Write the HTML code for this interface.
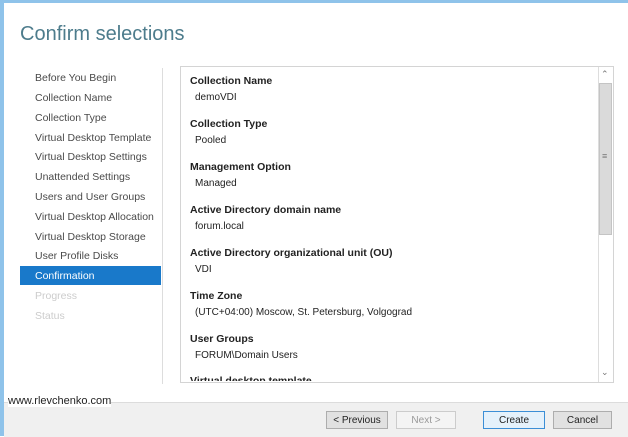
<!DOCTYPE html><html><head><style>
body{margin:0;width:628px;height:436px;overflow:hidden;background:#fff;font-family:"Liberation Sans",sans-serif;position:relative}
.a{position:absolute}
.nav{left:35px;font-size:10.5px;color:#4a4a4a;white-space:nowrap}
.h{left:190px;font-size:10.5px;font-weight:bold;color:#222}
.v{left:195px;font-size:10px;color:#222}
.btn{top:411px;height:18px;border:1px solid #adadad;background:#e1e1e1;font-size:10px;text-align:center;line-height:17px;color:#222;box-sizing:border-box}
</style></head><body>
<div class="a" style="left:0;top:0;width:628px;height:3px;background:#8fc3ea"></div>
<div class="a" style="left:0;top:0;width:4px;height:436px;background:#8fc3ea"></div>
<div class="a" style="left:20px;top:23px;font-size:20px;color:#4d7c8c">Confirm selections</div>
<div class="a" style="left:162px;top:68px;width:1px;height:316px;background:#ddd"></div>
<div class="a" style="left:20px;top:266px;width:141px;height:19px;background:#1979ca"></div>
<div class="a nav" style="top:72px">Before You Begin</div>
<div class="a nav" style="top:92px">Collection Name</div>
<div class="a nav" style="top:112px">Collection Type</div>
<div class="a nav" style="top:132px">Virtual Desktop Template</div>
<div class="a nav" style="top:151px">Virtual Desktop Settings</div>
<div class="a nav" style="top:171px">Unattended Settings</div>
<div class="a nav" style="top:191px">Users and User Groups</div>
<div class="a nav" style="top:211px">Virtual Desktop Allocation</div>
<div class="a nav" style="top:231px">Virtual Desktop Storage</div>
<div class="a nav" style="top:250px">User Profile Disks</div>
<div class="a nav" style="top:270px;color:#fff">Confirmation</div>
<div class="a nav" style="top:290px;color:#ccc">Progress</div>
<div class="a nav" style="top:310px;color:#ccc">Status</div>
<div class="a" style="left:180px;top:66px;width:432px;height:315px;border:1px solid #d4d4d4;overflow:hidden">
<div class="a" style="left:417px;top:0;width:15px;height:315px;border-left:1px solid #ddd;background:#fff"></div>
<div class="a" style="left:418px;top:16px;width:13px;height:152px;background:#dadada;border:1px solid #c4c4c4;box-sizing:border-box"></div>
<div class="a" style="left:420px;top:2px;font-size:9px;color:#777">&#8963;</div>
<div class="a" style="left:420px;top:300px;font-size:9px;color:#777">&#8964;</div>
<div class="a" style="left:421px;top:84px;font-size:9px;color:#777">&#8801;</div>
</div>
<div class="a h" style="top:75px">Collection Name</div><div class="a v" style="top:92px">demoVDI</div>
<div class="a h" style="top:118px">Collection Type</div><div class="a v" style="top:135px">Pooled</div>
<div class="a h" style="top:161px">Management Option</div><div class="a v" style="top:178px">Managed</div>
<div class="a h" style="top:204px">Active Directory domain name</div><div class="a v" style="top:221px">forum.local</div>
<div class="a h" style="top:247px">Active Directory organizational unit (OU)</div><div class="a v" style="top:264px">VDI</div>
<div class="a h" style="top:290px">Time Zone</div><div class="a v" style="top:307px">(UTC+04:00) Moscow, St. Petersburg, Volgograd</div>
<div class="a h" style="top:333px">User Groups</div><div class="a v" style="top:350px">FORUM\Domain Users</div>
<div class="a" style="left:190px;top:375px;height:6px;overflow:hidden;font-size:10.5px;font-weight:bold;color:#222">Virtual desktop template</div>
<div class="a" style="left:4px;top:402px;width:624px;height:34px;background:#f0f0f0;border-top:1px solid #dcdcdc"></div>
<div class="a" style="left:8px;top:395px;font-size:11px;color:#222;background:#fff">www.rlevchenko.com</div>
<div class="a btn" style="left:326px;width:62px">&lt; Previous</div>
<div class="a btn" style="left:396px;width:60px;color:#999;background:#f4f4f4;border-color:#ccc">Next &gt;</div>
<div class="a btn" style="left:483px;width:62px;background:#e5f1fb;border-color:#3c8ed6">Create</div>
<div class="a btn" style="left:553px;width:59px">Cancel</div>
</body></html>
